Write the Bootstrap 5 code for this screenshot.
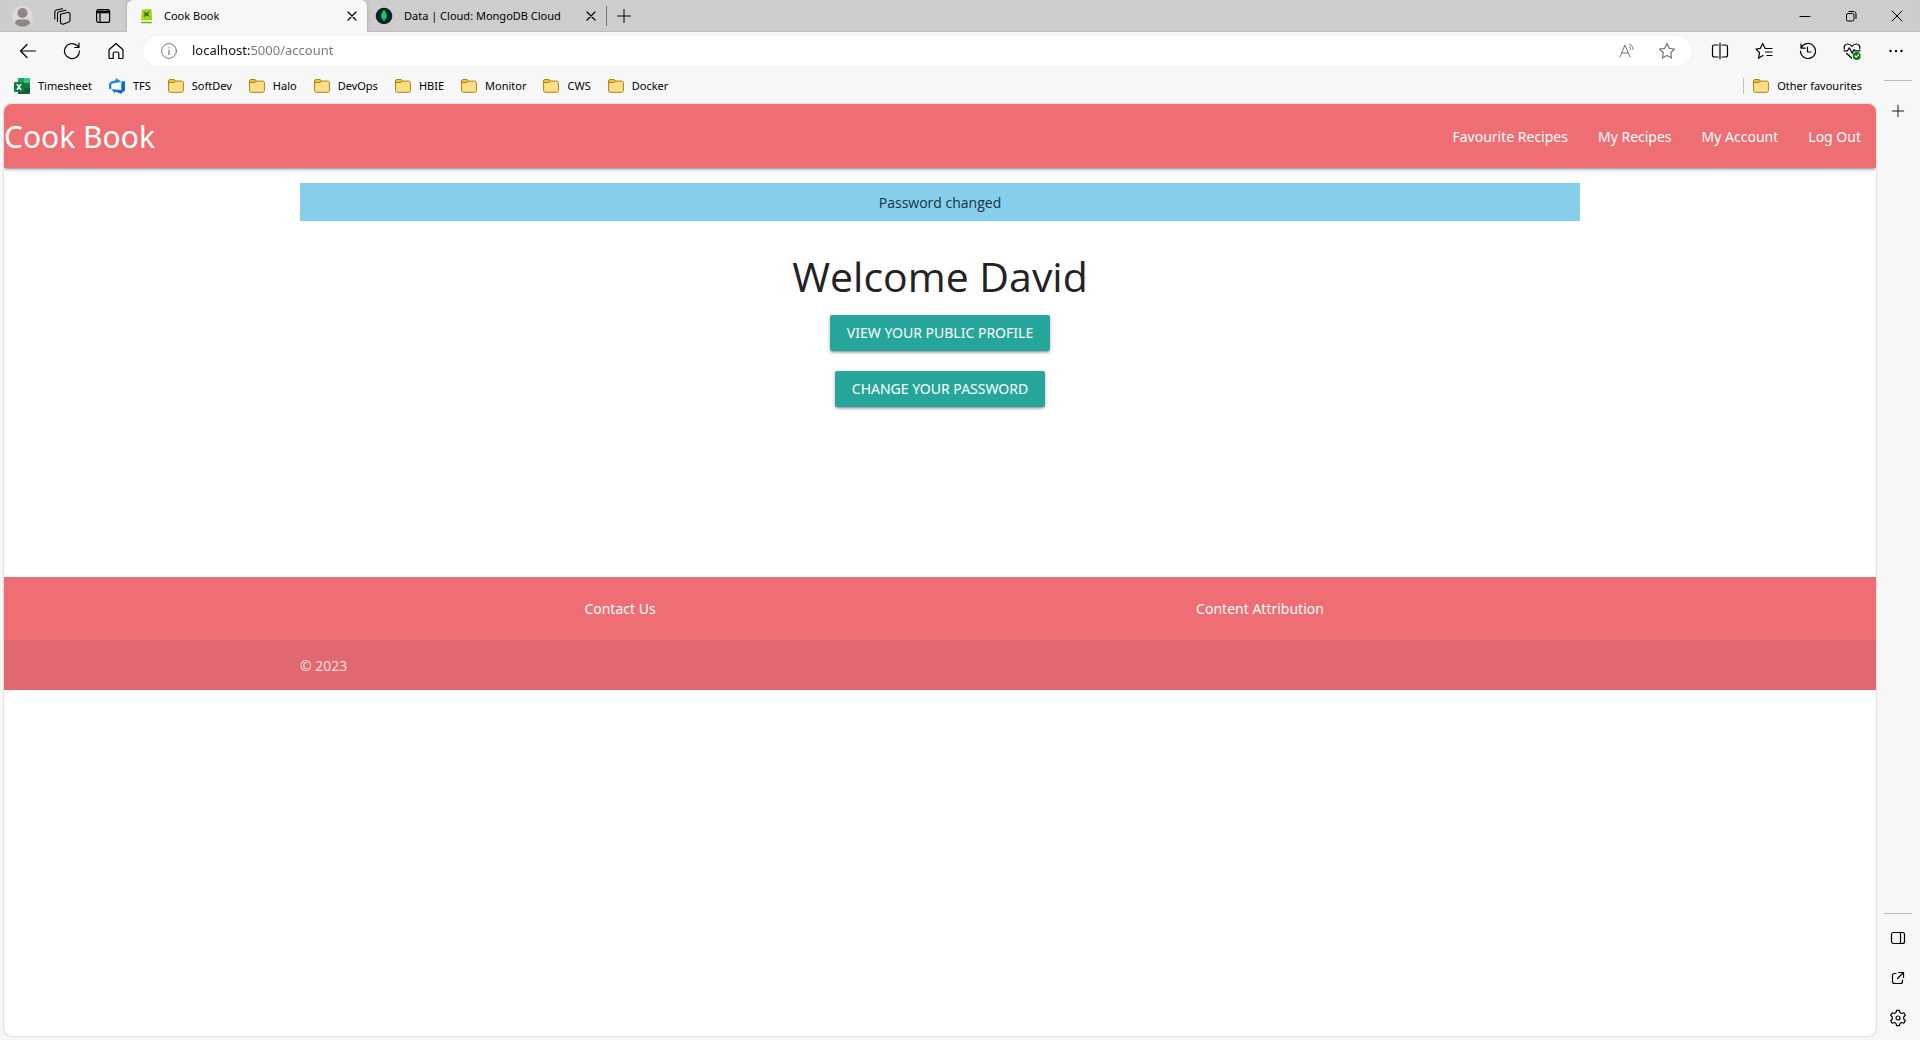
<!DOCTYPE html>
<html lang="en">
<head>
<meta charset="utf-8">
<meta name="viewport" content="width=device-width, initial-scale=1">
<title>Cook Book</title>
<link href="https://cdn.jsdelivr.net/npm/bootstrap@5.3.0/dist/css/bootstrap.min.css" rel="stylesheet">
<style>
  body { font-family: "Noto Sans", "Open Sans", sans-serif; background: #f7f7f7; color: #000; }
  svg { display: block; flex: none; fill: none; stroke: currentColor; stroke-linecap: round; stroke-linejoin: round; }
  svg.solid { stroke: none; }
  button { border: 0; background: none; color: inherit; padding: 0; }
  a { color: inherit; text-decoration: none; }

  /* browser frame */
  .tabstrip { height: 32px; background: #cdcdcd; font-size: 11px; box-shadow: inset 0 -1px 1px #bdbdbd; }
  .strip-tools { width: 127px; padding-left: 12px; gap: 21px; }
  .browser-tab { width: 239px; padding: 0 5px 0 13px; gap: 11px; height: 32px; }
  .browser-tab.current { width: 240px; background: #f7f7f7; border-radius: 6px 6px 0 0; box-shadow: 0 0 3px #999; clip-path: inset(0 -3px 0 -3px); }
  .tab-rule { width: 1px; height: 20px; background: #777; }
  .cell-btn { display: flex; align-items: center; justify-content: center; width: 46px; height: 32px; flex: none; }
  .new-tab { width: 34px; }
  .tool-row { height: 38px; padding: 0 2px 0 6px; }
  .tool-btn { display: flex; align-items: center; justify-content: center; width: 44px; height: 30px; flex: none; }
  .address { height: 30px; border-radius: 15px; background: #fff; margin: 0 6px 0 5px; padding: 0 5px 0 18px; box-shadow: 0 0 2px #e4e4e4; color: #767676; }
  .url-box { border: 0; outline: 0; padding: 0; margin-left: 15px; font-size: 13px; color: #111;
    background: linear-gradient(90deg, #111 58px, #767676 58px); -webkit-background-clip: text; background-clip: text; -webkit-text-fill-color: transparent; }
  .address .tool-btn { width: 40px; }
  .bookmarks { height: 34px; padding: 0 14px 2px; font-size: 11px; gap: 17px; }
  .bookmarks a { gap: 8px; }
  .mark-rule { width: 1px; height: 16px; background: #c4c4c4; margin-right: -8px; }
  .side-rail { width: 44px; padding: 10px 0 2px; }
  .rail-rule { width: 28px; height: 1px; background: #bdbdbd; }
  .rail-btn { width: 44px; height: 40px; display: flex; align-items: center; justify-content: center; }

  /* site */
  .viewport { background: #fff; border-radius: 8px; margin: 0 0 4px 4px; box-shadow: 0 0 2px #aaa; overflow: hidden; }
  .site-nav { height: 64px; background: #ee6e73; color: #fff; font-size: 14px;
    box-shadow: 0 2px 2px 0 rgba(0,0,0,.14), 0 3px 1px -2px rgba(0,0,0,.12), 0 1px 5px 0 rgba(0,0,0,.2); }
  .site-logo { font-size: 30px; }
  .site-nav .nav-item a { padding: 0 15px; }
  .inner { width: 70%; max-width: 1280px; margin: 0 auto; }
  .flash { background: #87ceeb; height: 38px; margin: 15px 0 31px; font-size: 14px; font-family: "Open Sans", sans-serif; color: #16323e; }
  .welcome { font-family: "Open Sans", sans-serif; font-size: 41px; line-height: 48px; font-weight: 400; margin: 0 0 15px; color: #222; }
  .btn.teal { --bs-btn-bg: #26a69a; --bs-btn-color: #fff; --bs-btn-hover-bg: #2bbbad; --bs-btn-hover-color: #fff;
    height: 36px; line-height: 36px; padding: 0 17px; border: 0; border-radius: 2px; font-size: 14px; text-transform: uppercase;
    box-shadow: 0 2px 2px 0 rgba(0,0,0,.14), 0 3px 1px -2px rgba(0,0,0,.12), 0 1px 5px 0 rgba(0,0,0,.2); }
  .actions { gap: 20px; padding-bottom: 170px; }
  .site-foot { background: #ee6e73; color: #fff; font-size: 14px; }
  .foot-links { height: 63px; }
  .foot-copy { height: 50px; background: #df696e; color: #fbdedf; }
</style>
</head>
<body>
<svg width="0" height="0" class="position-absolute" aria-hidden="true">
  <symbol id="folder" viewBox="0 0 16 16"><path d="M.6 3.2C.6 2.100 1.300 1.500 2.300 1.500h3.500l1.700 1.600h6c1.200 0 1.900.7 1.900 1.800v7.500c0 1.100-.7 1.900-1.900 1.900H2.500C1.300 14.300.6 13.500.6 12.400z" fill="#ffdf85" stroke="#a87e14"/><path d="M.6 5V3.200C.6 2.100 1.300 1.500 2.300 1.500h3.500l1.500 1.500-1.200 1.500H1z" fill="#f0c240" stroke="#a87e14" stroke-width=".9"/></symbol>
  <symbol id="cross" viewBox="0 0 16 16"><path d="M4 4l8 8M12 4l-8 8" stroke-width="1.200"/></symbol>
  <symbol id="plus" viewBox="0 0 16 16"><path d="M8 1.500v13M1.500 8h13"/></symbol>
</svg>

<div class="d-flex flex-column min-vh-100">
  <header>
    <div class="tabstrip d-flex align-items-center">
      <div class="strip-tools d-flex align-items-center">
        <button type="button" aria-label="Profile"><svg class="solid" width="21" height="21" viewBox="0 0 21 21"><circle cx="10.500" cy="10.500" r="10.500" fill="#dcdad7"/><circle cx="10.500" cy="7" r="5" fill="#8c8782"/><path d="M3 17.500c0-3 2-4 4-4h7c2 0 4 1 4 4-2 2-4.500 3.200-7.500 3.200S5 19.500 3 17.500z" fill="#8c8782"/></svg></button>
        <button type="button" aria-label="Workspaces"><svg width="17" height="17" viewBox="0 0 17 17" stroke-width="1.100"><path d="M6.500 6.200l7-1.700c1.500-.3 2.500.3 2.500 1.600v6.200c0 .8-.4 1.300-1.200 1.600l-5 2c-1.600.6-3.300-.1-3.300-1.900zM3.500 13.200V5.700c0-1 .5-1.600 1.500-1.900l7-1.600M.8 11V4c0-1 .6-1.700 1.500-2L8.500.7"/></svg></button>
        <button type="button" aria-label="Tab actions"><svg width="20" height="16" viewBox="0 0 20 16" stroke-width="1.200"><rect x="4.600" y="1.600" width="13" height="12.800" rx="2"/><path d="M5 3h12.200v2H5z" fill="currentColor" stroke-width=".6"/><path d="M8 5v9"/></svg></button>
      </div>
      <div class="browser-tab current d-flex align-items-center">
        <svg class="solid" width="13" height="16" viewBox="0 0 13 16"><path d="M2 1.500L11.500 1 12.200 12.500 1 13z" fill="#a2d31b"/><path d="M1 12h11v2.500H2z" fill="#e7efc0"/><path d="M1 14h11v1.200H1.500z" fill="#70a81c"/><path d="M3.500 3l2.500 2 4-2-2 3 1.500 2.500-3-1L4 9l.7-3z" fill="#336f19"/></svg>
        <button type="button" class="flex-grow-1 text-start">Cook Book</button>
        <button type="button" aria-label="Close tab"><svg width="20" height="16"><use href="#cross"/></svg></button>
      </div>
      <div class="browser-tab d-flex align-items-center ps-2">
        <svg class="solid" width="18" height="18" viewBox="0 0 18 18"><circle cx="9" cy="9" r="8.300" fill="#03202c"/><path d="M9 2.800c1.200 1.500 2.600 3.400 2.600 6 0 2.200-1 3.500-2.300 4.600L9 15l-.3-1.600C7.400 12.300 6.400 11 6.400 8.800c0-2.600 1.400-4.500 2.600-6z" fill="#09e565"/><path d="M9 3v11" stroke="#04903e" stroke-width=".8"/></svg>
        <button type="button" class="flex-grow-1 text-start">Data | Cloud: MongoDB Cloud</button>
        <button type="button" aria-label="Close tab"><svg width="20" height="16"><use href="#cross"/></svg></button>
      </div>
      <span class="tab-rule"></span>
      <button type="button" class="cell-btn new-tab" aria-label="New tab"><svg width="16" height="16"><use href="#plus"/></svg></button>
      <div class="d-flex ms-auto">
        <button type="button" class="cell-btn" aria-label="Minimise"><svg width="12" height="12" viewBox="0 0 12 12"><path d="M1 6.500h10"/></svg></button>
        <button type="button" class="cell-btn" aria-label="Restore"><svg width="12" height="12" viewBox="0 0 12 12"><rect x="1.500" y="3.500" width="7.500" height="7.500" rx="1.500"/><path d="M4 1.500h4.500c1.500 0 2.500 1 2.500 2.500v4.500"/></svg></button>
        <button type="button" class="cell-btn" aria-label="Close window"><svg width="12" height="12" viewBox="0 0 12 12"><path d="M1 1l10 10M11 1L1 11"/></svg></button>
      </div>
    </div>

    <div class="tool-row d-flex align-items-center">
      <button type="button" class="tool-btn" aria-label="Back"><svg width="18" height="18" viewBox="0 0 18 18" stroke-width="1.200"><path d="M16.500 9H1.500M8 2.500L1.500 9 8 15.500"/></svg></button>
      <button type="button" class="tool-btn" aria-label="Refresh"><svg width="18" height="18" viewBox="0 0 18 18" stroke-width="1.200"><path d="M16.500 9A7.500 7.500 0 1 1 13.800 3.300L16 5.300M16 1.200v4.300h-4.300"/></svg></button>
      <button type="button" class="tool-btn" aria-label="Home"><svg width="18" height="18" viewBox="0 0 18 18" stroke-width="1.200"><path d="M2 7.800L9 1.500l7 6.300v7.700c0 .6-.4 1-1 1h-3.200v-5c0-1-.6-1.500-1.500-1.500H7.700c-.9 0-1.500.5-1.500 1.500v5H3c-.6 0-1-.4-1-1z"/></svg></button>
      <div class="address d-flex align-items-center flex-grow-1">
        <svg width="16" height="16" viewBox="0 0 16 16"><circle cx="8" cy="8" r="7.400"/><path d="M8 7v4.500M8 4.500v.3" stroke-width="1.200"/></svg>
        <input class="url-box flex-grow-1" type="text" aria-label="Address" value="localhost:5000/account">
        <button type="button" class="tool-btn" aria-label="Read aloud"><svg width="17" height="16" viewBox="0 0 17 16"><path d="M1 14L6 2l5 12M2.800 10h6.400M10 3.200c1 .8 1.500 2 1.500 3.300M10.500 1c2.200 1 3.500 3 3.500 5.500"/></svg></button>
        <button type="button" class="tool-btn" aria-label="Add to favourites"><svg width="18" height="18" viewBox="0 0 18 18" stroke-width="1.200"><path d="M9 1.500l2.300 4.800 5.200.7-3.800 3.700.9 5.300L9 13.500 4.400 16l.9-5.300L1.500 7l5.200-.7z"/></svg></button>
      </div>
      <button type="button" class="tool-btn" aria-label="Split screen"><svg width="18" height="18" viewBox="0 0 18 18" stroke-width="1.200"><path d="M7 3H3.500C2.200 3 1.500 3.700 1.500 5v8c0 1.300.7 2 2 2H7M11 3h3.500c1.300 0 2 .7 2 2v8c0 1.300-.7 2-2 2H11M9 1v16"/></svg></button>
      <button type="button" class="tool-btn" aria-label="Favourites"><svg width="18" height="18" viewBox="0 0 18 18" stroke-width="1.200"><path d="M11 6.300H10L7.700 1.500 5.400 6.300 1 7l3.500 3.700-1 5.500L8 13.500M11.500 6.500H17M10.500 10H17M12 13.500h5"/></svg></button>
      <button type="button" class="tool-btn" aria-label="History"><svg width="18" height="18" viewBox="0 0 18 18" stroke-width="1.200"><path d="M2 2v4.200h4.200M2.200 5.800A7.500 7.500 0 1 1 1.500 9M8.500 5v5h3.500"/></svg></button>
      <button type="button" class="tool-btn" aria-label="Browser essentials"><svg width="18" height="18" viewBox="0 0 18 18" stroke-width="1.200"><path d="M1.300 7C.5 3.800 2.200 2 4.700 2 6.800 2 8 3 9 4.300 10 3 11.200 2 13.300 2c2.500 0 4.200 1.800 3.400 5M1 8.800h3.500l1.800-3 2.900 5.500 1.800-3.800.8 1.300H17M3.500 11.300L8.500 16"/><circle cx="13.700" cy="14" r="4" fill="#107c10" stroke="none"/><path d="M12 14l1.300 1.200 2.200-2.400" stroke="#fff"/></svg></button>
      <button type="button" class="tool-btn" aria-label="More"><svg class="solid" width="16" height="16" viewBox="0 0 16 16"><g fill="#000"><circle cx="2.500" cy="8" r="1.200"/><circle cx="8" cy="8" r="1.200"/><circle cx="13.500" cy="8" r="1.200"/></g></svg></button>
    </div>
  </header>

  <div class="d-flex flex-grow-1">
    <div class="d-flex flex-column flex-grow-1">
      <nav class="bookmarks d-flex align-items-center" aria-label="Bookmarks">
        <a class="d-flex align-items-center" href="#"><svg class="solid" width="16" height="16" viewBox="0 0 16 16"><path d="M4 0h11c.6 0 1 .4 1 1v4H4z" fill="#21a366"/><path d="M10 0h5c.6 0 1 .4 1 1v4h-6z" fill="#33c481"/><path d="M4 5h12v5H4z" fill="#107c41"/><path d="M4 10h12v5c0 .6-.4 1-1 1H4z" fill="#185c37"/><rect y="4" width="10" height="10" rx="1" fill="#107c41"/><path d="M3.200 6.500l3.600 5M6.800 6.500l-3.600 5" stroke="#fff" stroke-width="1.300"/></svg>Timesheet</a>
        <a class="d-flex align-items-center" href="#"><svg class="solid" width="16" height="16" viewBox="0 0 16 16"><path d="M16 3v9.500l-4 3.300-6-2.200v2.200L2.600 11.300l9.700.8V3.700z" fill="#0a70cf"/><path d="M12.400 3.700L6.800 0v2.300L1.600 3.800 0 5.900v4.600l2.300 1V5.700z" fill="#1387e0"/></svg>TFS</a>
        <a class="d-flex align-items-center" href="#"><svg width="16" height="16"><use href="#folder"/></svg>SoftDev</a>
        <a class="d-flex align-items-center" href="#"><svg width="16" height="16"><use href="#folder"/></svg>Halo</a>
        <a class="d-flex align-items-center" href="#"><svg width="16" height="16"><use href="#folder"/></svg>DevOps</a>
        <a class="d-flex align-items-center" href="#"><svg width="16" height="16"><use href="#folder"/></svg>HBIE</a>
        <a class="d-flex align-items-center" href="#"><svg width="16" height="16"><use href="#folder"/></svg>Monitor</a>
        <a class="d-flex align-items-center" href="#"><svg width="16" height="16"><use href="#folder"/></svg>CWS</a>
        <a class="d-flex align-items-center" href="#"><svg width="16" height="16"><use href="#folder"/></svg>Docker</a>
        <span class="mark-rule ms-auto"></span>
        <a class="d-flex align-items-center" href="#"><svg width="16" height="16"><use href="#folder"/></svg>Other favourites</a>
      </nav>

      <div class="viewport flex-grow-1">
        <nav class="site-nav d-flex align-items-center justify-content-between">
          <a class="site-logo" href="#">Cook Book</a>
          <ul class="nav">
            <li class="nav-item"><a href="#">Favourite Recipes</a></li>
            <li class="nav-item"><a href="#">My Recipes</a></li>
            <li class="nav-item"><a href="#">My Account</a></li>
            <li class="nav-item"><a href="#">Log Out</a></li>
          </ul>
        </nav>
        <main class="inner text-center">
          <div class="flash d-flex align-items-center justify-content-center" role="status">Password changed</div>
          <h1 class="welcome">Welcome David</h1>
          <div class="actions d-flex flex-column align-items-center">
            <a class="btn teal" href="#">View your public profile</a>
            <a class="btn teal" href="#">Change your password</a>
          </div>
        </main>
        <footer class="site-foot">
          <div class="inner">
            <div class="foot-links row g-0 align-items-center text-center">
              <div class="col-6"><a href="#">Contact Us</a></div>
              <div class="col-6"><a href="#">Content Attribution</a></div>
            </div>
          </div>
          <div class="foot-copy d-flex align-items-center">
            <div class="inner">© 2023</div>
          </div>
        </footer>
      </div>
    </div>

    <aside class="side-rail d-flex flex-column align-items-center">
      <span class="rail-rule"></span>
      <button type="button" class="rail-btn mt-2 pt-1" aria-label="Add"><svg width="14" height="14"><use href="#plus"/></svg></button>
      <span class="rail-rule mt-auto mb-1"></span>
      <button type="button" class="rail-btn" aria-label="Toggle sidebar"><svg width="16" height="16" viewBox="0 0 16 16" stroke-width="1.200"><rect x="1.500" y="2.500" width="13" height="11" rx="2"/><path d="M10.500 2.500v11"/></svg></button>
      <button type="button" class="rail-btn" aria-label="Open link"><svg width="16" height="16" viewBox="0 0 16 16" stroke-width="1.200"><path d="M6 3.500H4.500c-1.200 0-2 .8-2 2v6c0 1.200.8 2 2 2h6c1.200 0 2-.8 2-2V10M8.500 2.500H13.500V7.500M13.500 2.500L7.500 8.500"/></svg></button>
      <button type="button" class="rail-btn" aria-label="Settings"><svg width="18" height="18" viewBox="0 0 18 18" stroke-width="1.200"><path d="M7.600 1.300h2.800l.6 2.300 1.500.9 2.300-.7 1.500 2.600L14.700 8v2l1.600 1.600-1.500 2.600-2.300-.7-1.500.9-.6 2.300H7.600L7 14.400l-1.500-.9-2.300.7-1.500-2.600L3.300 10V8L1.700 6.400l1.500-2.600 2.300.7L7 3.600z"/><circle cx="9" cy="9" r="2"/></svg></button>
    </aside>
  </div>
</div>
<script src="https://cdn.jsdelivr.net/npm/bootstrap@5.3.0/dist/js/bootstrap.bundle.min.js"></script>
</body>
</html>
